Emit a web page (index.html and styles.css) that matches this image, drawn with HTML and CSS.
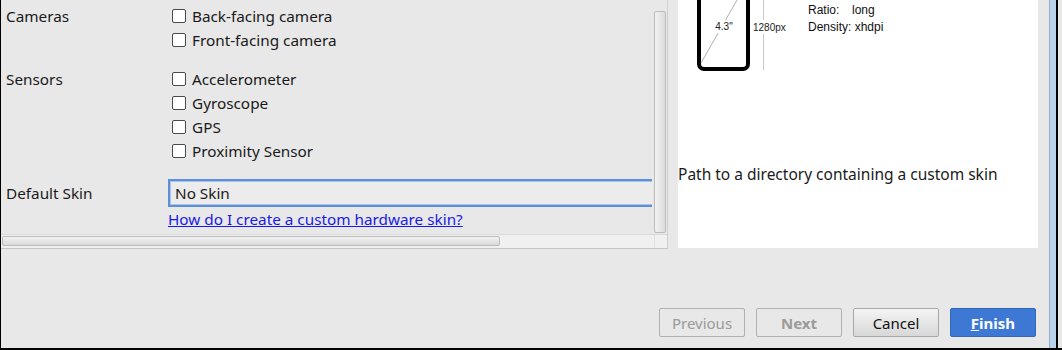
FILE: index.html
```html
<!DOCTYPE html>
<html lang="en">
<head>
  <meta charset="UTF-8">
  <title>Virtual Device Configuration</title>
  <link rel="stylesheet" href="styles.css">
</head>
<body>
  <div class="frame">
    <div class="dialog">
      <div class="main">
        <div class="scroll-pane">
          <div class="scroll-view">
            <div class="form">
              <div class="group">
                <div class="label">Cameras</div>
                <div class="options">
                  <label class="check"><span class="box"></span>Back-facing camera</label>
                  <label class="check"><span class="box"></span>Front-facing camera</label>
                </div>
              </div>
              <div class="group">
                <div class="label">Sensors</div>
                <div class="options">
                  <label class="check"><span class="box"></span>Accelerometer</label>
                  <label class="check"><span class="box"></span>Gyroscope</label>
                  <label class="check"><span class="box"></span>GPS</label>
                  <label class="check"><span class="box"></span>Proximity Sensor</label>
                </div>
              </div>
              <div class="group skin">
                <div class="label">Default Skin</div>
                <div class="options">
                  <div class="combo">No Skin</div>
                  <a class="help" href="#">How do I create a custom hardware skin?</a>
                </div>
              </div>
            </div>
            <div class="vbar"><div class="vthumb"></div></div>
          </div>
          <div class="hbar">
            <div class="htrack"><div class="hthumb"></div></div>
            <div class="corner"></div>
          </div>
        </div>

        <div class="preview">
          <div class="device">
            <svg width="130" height="75" viewBox="0 0 130 75">
              <rect x="21" y="-40" width="49" height="109" rx="5" fill="none" stroke="#000" stroke-width="4"/>
              <line x1="23" y1="63" x2="59" y2="0" stroke="#b0b0b0" stroke-width="1"/>
              <line x1="85.5" y1="0" x2="85.5" y2="70" stroke="#c8c8c8" stroke-width="1"/>
              <rect x="35" y="20" width="22" height="13" fill="#fff"/>
              <rect x="74" y="20" width="38" height="14" fill="#fff"/>
              <text x="46" y="30" font-family="Liberation Sans, sans-serif" font-size="10" text-anchor="middle" fill="#222">4.3"</text>
              <text x="75" y="31" font-family="Liberation Sans, sans-serif" font-size="10" fill="#222">1280px</text>
            </svg>
            <div class="specs">
              <div><span class="key">Ratio:</span>long</div>
              <div>Density: xhdpi</div>
            </div>
          </div>
          <p class="hint">Path to a directory containing a custom skin</p>
        </div>
      </div>

      <div class="footer">
        <button class="btn disabled">Previous</button>
        <button class="btn disabled bold">Next</button>
        <button class="btn">Cancel</button>
        <button class="btn primary"><u>F</u>inish</button>
      </div>
    </div>
    <div class="edge"></div>
  </div>
</body>
</html>
```

FILE: styles.css
```css
body { margin: 0; background: #e8e8e8; font-family: "Noto Sans", sans-serif; font-size: 15.3px; color: #1a1a1a; }
.frame { display: flex; width: 1062px; height: 350px; border-bottom: 2px solid #000; box-sizing: border-box; }
.dialog { width: 1049px; display: flex; flex-direction: column; border-left: 1px solid #000; box-sizing: border-box; }
.edge { width: 13px; box-sizing: border-box; background: #b9d1ea; border-left: 1px solid #93aecb; border-right: 4px solid #e8e8e8; box-shadow: inset -2px 0 0 #000; }

.main { display: flex; height: 249px; }
.scroll-pane { width: 666px; display: flex; flex-direction: column; border-right: 1px solid #cfcfcf; border-bottom: 1px solid #c4c4c4; }
.scroll-view { flex: 1; display: flex; min-height: 0; }
.form { flex: 1; overflow: hidden; padding: 4px 0 0 5px; }
.group { display: flex; margin-bottom: 15px; }
.label { width: 162px; line-height: 24px; flex-shrink: 0; }
.options { display: flex; flex-direction: column; }
.check { display: flex; align-items: center; height: 24px; }
.box { width: 12px; height: 12px; border: 1px solid #4a4a4a; border-radius: 2px; background: #fff; margin: 0 6px 0 4px; }
.skin { margin-top: 1px; }
.skin .label { line-height: 28px; padding-top: 1px; }
.combo { width: 600px; height: 28px; margin-top: 1px; box-sizing: border-box; border: 2px solid #5d8fd6; box-shadow: inset 0 0 0 1px #a9c4ec; padding-left: 5px; line-height: 24px; background: #ececec; }
.help { color: #1a1ae6; line-height: 24px; align-self: flex-start; }

.vbar { width: 12px; padding: 11px 1px 0 2px; }
.vthumb { height: 222px; border: 1px solid #bcbcbc; border-radius: 2px; background: linear-gradient(to right, #f2f2f2, #dcdcdc); box-sizing: border-box; }
.hbar { display: flex; height: 13px; background: #f0f0f0; border-top: 1px solid #dadada; }
.htrack { flex: 1; padding: 1px 0 0 1px; }
.hthumb { width: 498px; height: 10px; border: 1px solid #bcbcbc; border-radius: 2px; background: linear-gradient(#f2f2f2, #d9d9d9); box-sizing: border-box; }
.corner { width: 12px; border-left: 1px solid #e0e0e0; }

.preview { width: 360px; height: 248px; margin-left: 10px; background: #fff; }
.device { display: flex; height: 75px; }
.specs { font-family: "Liberation Sans", sans-serif; font-size: 12px; line-height: 17px; color: #111; padding-top: 2px; }
.key { display: inline-block; width: 44px; }
.hint { margin: 89px 0 0; font-size: 15.5px; line-height: 20px; }

.footer { flex: 1; display: flex; justify-content: flex-end; align-items: flex-start; gap: 11px; padding: 59px 13px 0 0; }
.btn { width: 86px; height: 29px; font-family: "Noto Sans", sans-serif; font-size: 15px; border: 1px solid #a8a8a8; border-radius: 2px; background: linear-gradient(#f4f4f4, #d8d8d8); color: #111; padding: 0; }
.btn.disabled { background: #e8e8e8; color: #9a9a9a; border-color: #b0b0b0; }
.btn.bold { font-weight: bold; }
.btn.primary { background: #3d78d4; border-color: #3266b8; color: #fff; font-weight: bold; }
```
